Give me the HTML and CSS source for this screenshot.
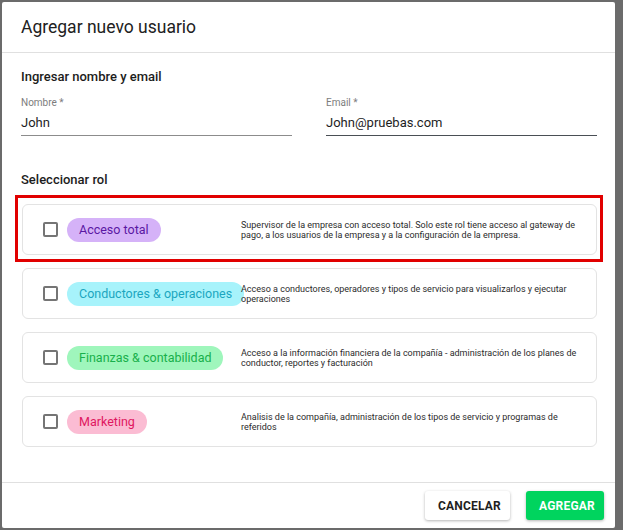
FILE: index.html
```html
<!DOCTYPE html>
<html lang="es">

<head>
    <meta charset="UTF-8">
    <meta name="viewport" content="width=device-width, initial-scale=1.0">
    <title>Agregar nuevo usuario</title>
    <link rel="stylesheet" href="styles.css">
</head>

<body>
    <div class="dialog">
        <div class="dialog-header">
            <h1>Agregar nuevo usuario</h1>
        </div>

        <div class="dialog-body">
            <h2 class="section-title">Ingresar nombre y email</h2>
            <div class="fields">
                <div class="field">
                    <label>Nombre *</label>
                    <div class="field-value">John</div>
                </div>
                <div class="field field-focus">
                    <label>Email *</label>
                    <div class="field-value">John@pruebas.com</div>
                </div>
            </div>

            <h2 class="section-title role-title">Seleccionar rol</h2>
            <div class="roles">
                <div class="role-card highlighted">
                    <span class="checkbox"></span>
                    <div class="chip-col"><span class="chip chip-purple">Acceso total</span></div>
                    <p class="role-desc">Supervisor de la empresa con acceso total. Solo este rol tiene acceso al gateway de pago, a los usuarios de la empresa y a la configuración de la empresa.</p>
                    <div class="highlight-box"></div>
                </div>
                <div class="role-card">
                    <span class="checkbox"></span>
                    <div class="chip-col"><span class="chip chip-cyan">Conductores &amp; operaciones</span></div>
                    <p class="role-desc">Acceso a conductores, operadores y tipos de servicio para visualizarlos y ejecutar operaciones</p>
                </div>
                <div class="role-card">
                    <span class="checkbox"></span>
                    <div class="chip-col"><span class="chip chip-green">Finanzas &amp; contabilidad</span></div>
                    <p class="role-desc">Acceso a la información financiera de la compañía - administración de los planes de conductor, reportes y facturación</p>
                </div>
                <div class="role-card">
                    <span class="checkbox"></span>
                    <div class="chip-col"><span class="chip chip-pink">Marketing</span></div>
                    <p class="role-desc">Analisis de la compañía, administración de los tipos de servicio y programas de referidos</p>
                </div>
            </div>
        </div>

        <div class="dialog-footer">
            <button class="btn btn-cancel">Cancelar</button>
            <button class="btn btn-add">Agregar</button>
        </div>
    </div>
</body>

</html>
```

FILE: styles.css
```css
* {
    box-sizing: border-box;
    margin: 0;
    padding: 0;
    font-family: Roboto, 'Liberation Sans', sans-serif;
}

body {
    width: 623px;
    height: 530px;
    background-color: #6b6b6b;
    padding: 2px 8px 2px 2px;
    overflow: hidden;
}

.dialog {
    width: 613px;
    height: 526px;
    background-color: white;
    border-radius: 2px;
    display: flex;
    flex-direction: column;
    color: #212121;
}

.dialog-header {
    height: 51px;
    padding: 0 19px;
    display: flex;
    align-items: center;
    border-bottom: 1px solid #e0e0e0;
}

.dialog-header h1 {
    font-size: 17.5px;
    font-weight: 400;
    color: #212121;
}

.dialog-body {
    flex: 1;
    padding: 16px 18px 0 19px;
}

.section-title {
    font-size: 13px;
    font-weight: 500;
    line-height: 16px;
    color: #1c1c1c;
}

.role-title {
    margin-top: 36px;
}

.fields {
    display: grid;
    grid-template-columns: 1fr 1fr;
    gap: 34px;
    margin-top: 12px;
}

.field {
    border-bottom: 1px solid #8c8c8c;
    padding-bottom: 3px;
}

.field-focus {
    border-bottom-color: #4a4f55;
}

.field label {
    display: block;
    font-size: 10px;
    line-height: 12px;
    color: #7d7d7d;
}

.field-value {
    margin-top: 5px;
    font-size: 13px;
    line-height: 18px;
    color: #1e1e1e;
}

.roles {
    margin-top: 16px;
    margin-left: 1px;
    display: flex;
    flex-direction: column;
    gap: 13px;
}

.role-card {
    position: relative;
    height: 51px;
    border: 1px solid #e3e3e3;
    border-radius: 6px;
    display: flex;
    align-items: center;
    padding: 0 18px 0 20px;
}

.checkbox {
    width: 15px;
    height: 15px;
    border: 2px solid #757575;
    border-radius: 2px;
    flex-shrink: 0;
}

.chip-col {
    width: 174px;
    margin-left: 9px;
    flex-shrink: 0;
}

.chip {
    display: inline-block;
    height: 24px;
    line-height: 24px;
    padding: 0 12px;
    border-radius: 12px;
    font-size: 12.5px;
    white-space: nowrap;
}

.chip-purple {
    background-color: #d5b2f8;
    color: #5a17a3;
}

.chip-cyan {
    background-color: #a7f3fb;
    color: #1ba6bf;
}

.chip-green {
    background-color: #9ff6bc;
    color: #18b04b;
}

.chip-pink {
    background-color: #fbbcd3;
    color: #df1760;
}

.role-desc {
    font-size: 9px;
    line-height: 10px;
    color: #2b2b2b;
}

/* red annotation frame around the first role */
.highlight-box {
    position: absolute;
    top: -10px;
    left: -8px;
    right: -7px;
    bottom: -8px;
    border: 3px solid #e10000;
    pointer-events: none;
}

.dialog-footer {
    height: 46px;
    border-top: 1px solid #e0e0e0;
    display: flex;
    justify-content: flex-end;
    align-items: flex-start;
    gap: 16px;
    padding: 8px 11px 0 0;
}

.btn {
    height: 29px;
    border: none;
    border-radius: 3px;
    font-size: 12px;
    font-weight: 700;
    text-transform: uppercase;
    letter-spacing: 0.2px;
    padding: 0 13px;
    box-shadow: 0 1px 3px rgba(0, 0, 0, 0.3);
    cursor: pointer;
}

.btn-cancel {
    width: 85px;
    background-color: white;
    color: #1f1f1f;
}

.btn-add {
    width: 78px;
    background-color: #00d45e;
    color: white;
}
```
